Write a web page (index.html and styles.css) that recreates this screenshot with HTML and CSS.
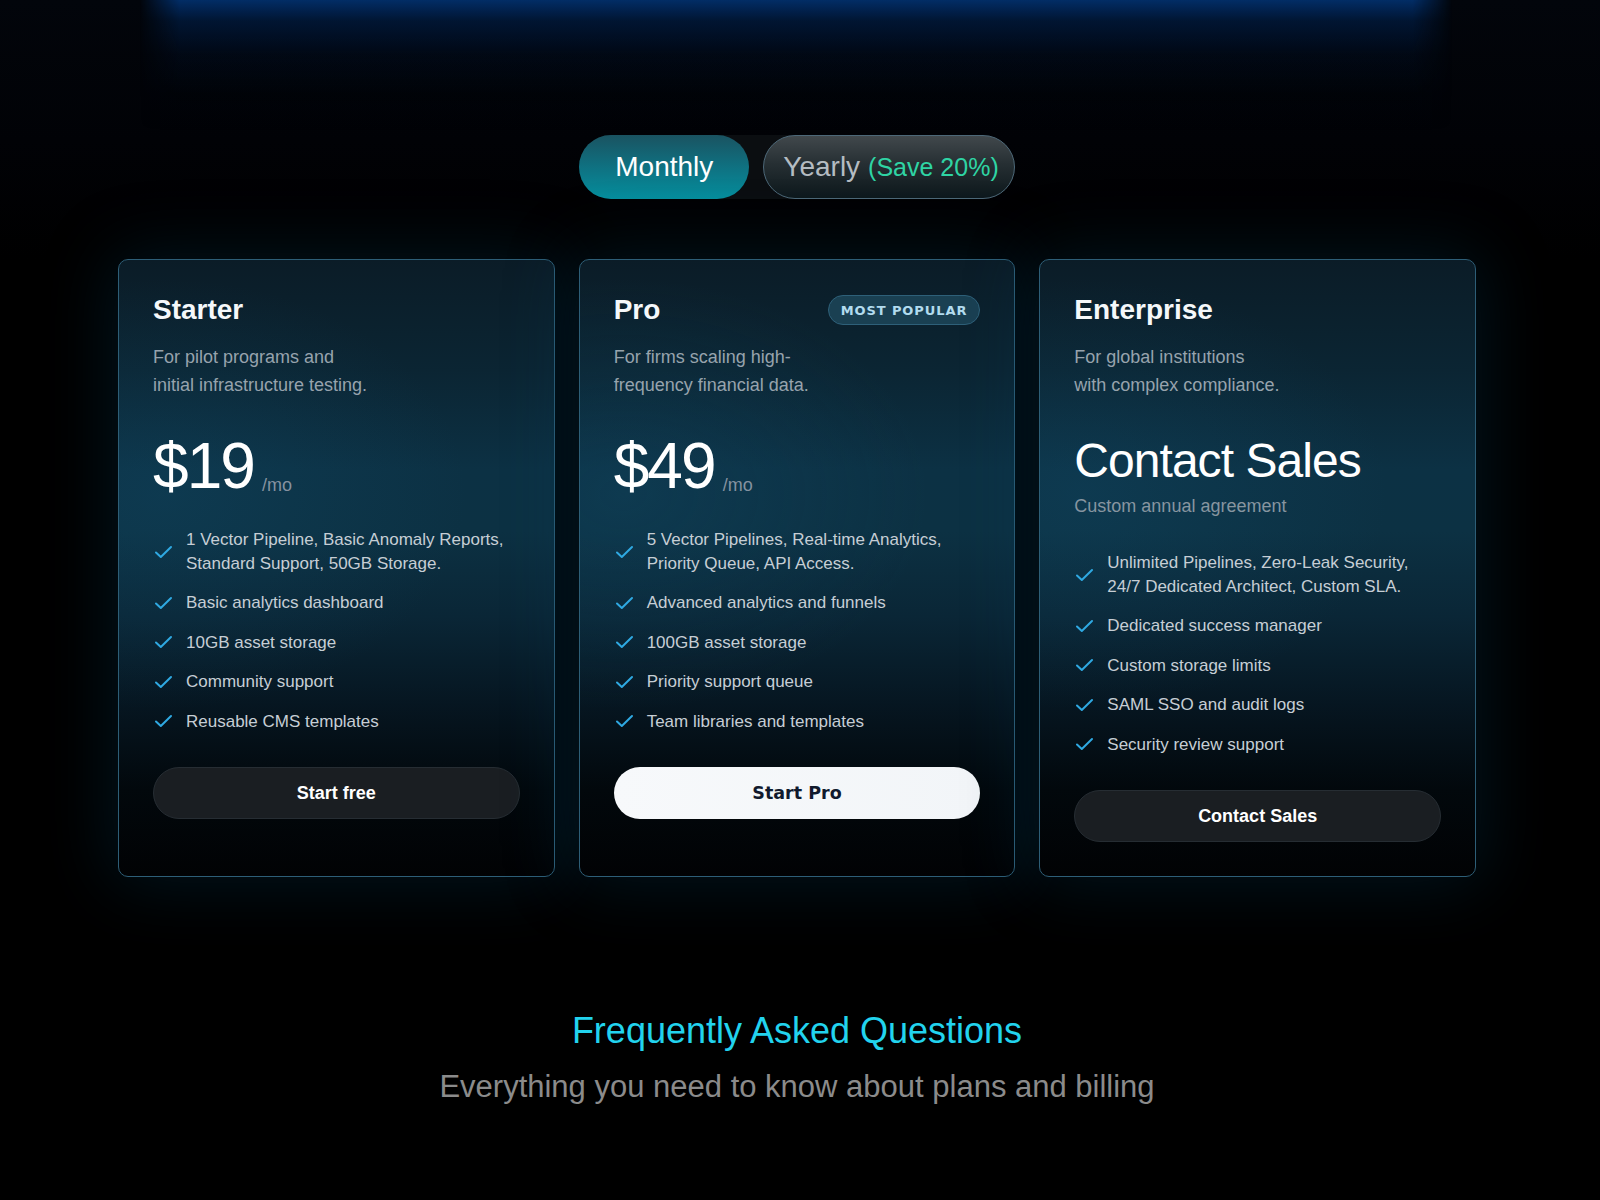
FILE: index.html
```html
<!DOCTYPE html>
<html lang="en">
<head>
<meta charset="utf-8">
<title>Pricing</title>
<link rel="stylesheet" href="styles.css">
</head>
<body>
<div class="top-glow"></div>
<main class="page">
  <div class="billing-toggle">
    <button class="toggle-btn active">Monthly</button>
    <button class="toggle-btn yearly">Yearly <span class="save">(Save 20%)</span></button>
  </div>

  <section class="plans">
    <article class="plan">
      <div class="plan-head"><h3>Starter</h3></div>
      <p class="plan-desc">For pilot programs and<br>initial infrastructure testing.</p>
      <div class="price"><span class="amount">$19</span><span class="per">/mo</span></div>
      <ul class="features">
        <li><svg class="check" viewBox="0 0 20 20"><path d="M3 10.5l4.8 4.5L18 5"/></svg><span>1 Vector Pipeline, Basic Anomaly Reports, Standard Support, 50GB Storage.</span></li>
        <li><svg class="check" viewBox="0 0 20 20"><path d="M3 10.5l4.8 4.5L18 5"/></svg><span>Basic analytics dashboard</span></li>
        <li><svg class="check" viewBox="0 0 20 20"><path d="M3 10.5l4.8 4.5L18 5"/></svg><span>10GB asset storage</span></li>
        <li><svg class="check" viewBox="0 0 20 20"><path d="M3 10.5l4.8 4.5L18 5"/></svg><span>Community support</span></li>
        <li><svg class="check" viewBox="0 0 20 20"><path d="M3 10.5l4.8 4.5L18 5"/></svg><span>Reusable CMS templates</span></li>
      </ul>
      <button class="cta">Start free</button>
    </article>

    <article class="plan">
      <div class="plan-head"><h3>Pro</h3><span class="badge">MOST POPULAR</span></div>
      <p class="plan-desc">For firms scaling high-<br>frequency financial data.</p>
      <div class="price"><span class="amount">$49</span><span class="per">/mo</span></div>
      <ul class="features">
        <li><svg class="check" viewBox="0 0 20 20"><path d="M3 10.5l4.8 4.5L18 5"/></svg><span>5 Vector Pipelines, Real-time Analytics, Priority Queue, API Access.</span></li>
        <li><svg class="check" viewBox="0 0 20 20"><path d="M3 10.5l4.8 4.5L18 5"/></svg><span>Advanced analytics and funnels</span></li>
        <li><svg class="check" viewBox="0 0 20 20"><path d="M3 10.5l4.8 4.5L18 5"/></svg><span>100GB asset storage</span></li>
        <li><svg class="check" viewBox="0 0 20 20"><path d="M3 10.5l4.8 4.5L18 5"/></svg><span>Priority support queue</span></li>
        <li><svg class="check" viewBox="0 0 20 20"><path d="M3 10.5l4.8 4.5L18 5"/></svg><span>Team libraries and templates</span></li>
      </ul>
      <button class="cta primary">Start Pro</button>
    </article>

    <article class="plan">
      <div class="plan-head"><h3>Enterprise</h3></div>
      <p class="plan-desc">For global institutions<br>with complex compliance.</p>
      <div class="price-custom">Contact Sales</div>
      <p class="price-note">Custom annual agreement</p>
      <ul class="features">
        <li><svg class="check" viewBox="0 0 20 20"><path d="M3 10.5l4.8 4.5L18 5"/></svg><span>Unlimited Pipelines, Zero-Leak Security, 24/7 Dedicated Architect, Custom SLA.</span></li>
        <li><svg class="check" viewBox="0 0 20 20"><path d="M3 10.5l4.8 4.5L18 5"/></svg><span>Dedicated success manager</span></li>
        <li><svg class="check" viewBox="0 0 20 20"><path d="M3 10.5l4.8 4.5L18 5"/></svg><span>Custom storage limits</span></li>
        <li><svg class="check" viewBox="0 0 20 20"><path d="M3 10.5l4.8 4.5L18 5"/></svg><span>SAML SSO and audit logs</span></li>
        <li><svg class="check" viewBox="0 0 20 20"><path d="M3 10.5l4.8 4.5L18 5"/></svg><span>Security review support</span></li>
      </ul>
      <button class="cta">Contact Sales</button>
    </article>
  </section>

  <section class="faq">
    <h2>Frequently Asked Questions</h2>
    <p>Everything you need to know about plans and billing</p>
  </section>
</main>
</body>
</html>
```

FILE: styles.css
```css
* { box-sizing: border-box; }

html, body {
  margin: 0;
  height: 1200px;
}

body {
  position: relative;
  overflow: hidden;
  padding-right: 6px;
  background: linear-gradient(180deg, #02050b 0px, #010206 140px, #000 260px);
  color: #fff;
  font-family: "Liberation Sans", Arial, sans-serif;
}

.top-glow {
  position: absolute;
  top: 0;
  left: 140px;
  right: 148px;
  height: 130px;
  background: linear-gradient(180deg, rgba(2, 46, 104, 0.98) 0%, rgba(1, 28, 66, 0.72) 16%, rgba(1, 14, 34, 0.48) 42%, rgba(0, 5, 12, 0.18) 72%, rgba(0, 0, 0, 0) 100%);
  -webkit-mask-image: linear-gradient(90deg, transparent 0%, #000 3%, #000 97%, transparent 100%);
  mask-image: linear-gradient(90deg, transparent 0%, #000 3%, #000 97%, transparent 100%);
  pointer-events: none;
}

.page {
  position: relative;
  width: 1358px;
  margin: 0 auto;
  padding-top: 135px;
}

/* Billing toggle */
.billing-toggle {
  display: flex;
  gap: 14px;
  width: max-content;
  margin: 0 auto;
  background: #0b0e11;
  border-radius: 32px;
}

.toggle-btn {
  display: flex;
  align-items: center;
  height: 64px;
  border-radius: 32px;
  border: none;
  font-family: "Liberation Sans", Arial, sans-serif;
  font-size: 28px;
  cursor: pointer;
}

.toggle-btn.active {
  padding: 0 36px;
  background: linear-gradient(180deg, #1a5361 0%, #0f7181 50%, #058f9e 100%);
  color: #fff;
}

.toggle-btn.yearly {
  padding: 0 15px 0 19px;
  background: linear-gradient(180deg, #41484c 0%, #262f33 45%, #0d181c 100%);
  border: 1px solid #4d6878;
  color: #b4bcc2;
}

.save {
  margin-left: 8px;
  font-size: 25px;
  color: #2fd4a4;
}

/* Plans */
.plans {
  display: grid;
  grid-template-columns: repeat(3, 1fr);
  gap: 24px;
  margin-top: 60px;
}

.plan {
  display: flex;
  flex-direction: column;
  padding: 34px;
  border: 1px solid #2d5e77;
  border-radius: 10px;
  background:
    radial-gradient(ellipse 70% 35% at 10% 38%, rgba(18, 80, 112, 0.28), rgba(18, 80, 112, 0) 100%),
    linear-gradient(180deg, #0b1c27 0%, #0b2533 18%, #0c3144 34%, #0c3143 44%, #0a2636 58%, #061621 72%, #02080c 86%, #010204 100%);
  box-shadow: 0 0 70px 6px rgba(6, 62, 92, 0.33);
}

.plan-head {
  display: flex;
  align-items: center;
  justify-content: space-between;
  height: 32px;
}

.plan-head h3 {
  margin: 0;
  font-size: 28px;
  line-height: 32px;
  font-weight: 700;
  color: #f5f8fa;
}

.badge {
  display: flex;
  align-items: center;
  height: 30px;
  padding: 0 12px;
  border-radius: 15px;
  background: #1a4052;
  border: 1px solid #2e6079;
  color: #b2dcef;
  font-family: "DejaVu Sans", Verdana, sans-serif;
  font-weight: 700;
  font-size: 13px;
  letter-spacing: 0.07em;
}

.plan-desc {
  margin: 17px 0 0;
  font-size: 18px;
  line-height: 28px;
  color: #97a3ad;
}

.price {
  margin-top: 35px;
  height: 64px;
  line-height: 64px;
  white-space: nowrap;
}

.amount {
  font-size: 64px;
  letter-spacing: -0.03em;
  color: #fff;
  vertical-align: baseline;
}

.per {
  margin-left: 8px;
  font-size: 18px;
  color: #8592a0;
  vertical-align: -3px;
}

.price-custom {
  margin-top: 38px;
  font-size: 48px;
  line-height: 1;
  letter-spacing: -0.02em;
  color: #fff;
}

.price-note {
  margin: 8px 0 0;
  font-size: 18px;
  line-height: 27px;
  color: #8795a0;
}

.features {
  list-style: none;
  margin: 30px 0 0;
  padding: 0;
  display: flex;
  flex-direction: column;
  gap: 16px;
}

.price-note + .features {
  margin-top: 31px;
}

.features li {
  display: flex;
  align-items: center;
  gap: 13px;
  font-size: 17px;
  line-height: 23.5px;
  color: #c6ced5;
}

.check {
  flex: none;
  width: 20px;
  height: 20px;
  fill: none;
  stroke: #2fa9e2;
  stroke-width: 2;
  stroke-linecap: round;
  stroke-linejoin: round;
}

.cta {
  margin-top: 34px;
  width: 100%;
  height: 52px;
  border-radius: 26px;
  border: 1px solid #262d33;
  background: #1a1e22;
  color: #fff;
  font-family: "Liberation Sans", Arial, sans-serif;
  font-weight: 700;
  font-size: 18px;
  cursor: pointer;
}

.cta.primary {
  border: none;
  background: linear-gradient(90deg, #f7f9fb 0%, #f2f5f8 100%);
  color: #111a2d;
  font-family: "DejaVu Sans", Verdana, sans-serif;
  font-size: 17.5px;
}

/* FAQ */
.faq {
  margin-top: 133px;
  text-align: center;
}

.faq h2 {
  margin: 0;
  font-size: 36px;
  font-weight: 400;
  color: #22d3ee;
}

.faq p {
  margin: 17px 0 0;
  font-size: 31px;
  color: #8b8b8b;
}
```
